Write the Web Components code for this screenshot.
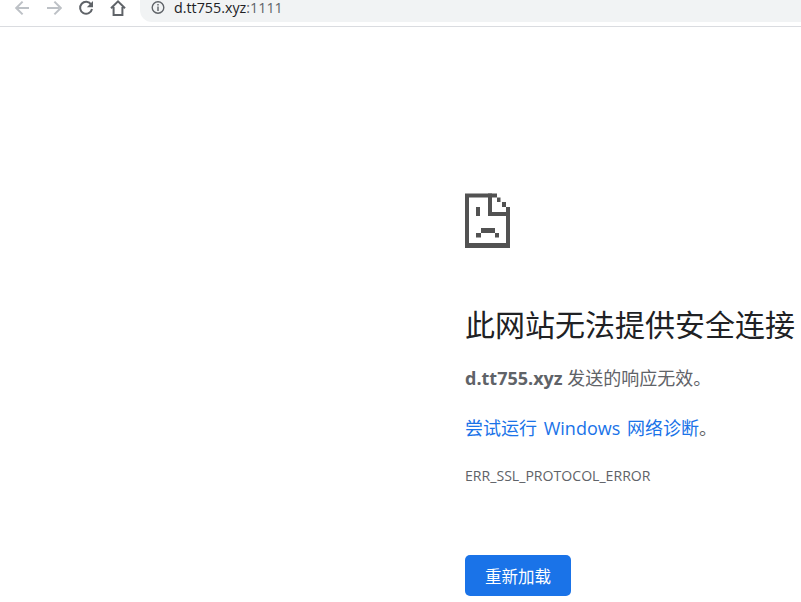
<!DOCTYPE html>
<html lang="zh">
<head>
<meta charset="utf-8">
<title>d.tt755.xyz</title>
<style>
    html, body {
        margin: 0;
        height: 100%;
        overflow: hidden;
        background: #fff;
        font-family: "Open Sans", "Noto Sans CJK SC", sans-serif;
    }
    a {
        color: #1a73e8;
    }
</style>
</head>
<body>
<browser-toolbar url-host="d.tt755.xyz" url-port=":1111"></browser-toolbar>
<error-page>
    <span slot="title">此网站无法提供安全连接</span>
    <span slot="summary"><b>d.tt755.xyz</b> 发送的响应无效。</span>
    <span slot="hint"><a>尝试运行 Windows 网络诊断</a>。</span>
    <span slot="code">ERR_SSL_PROTOCOL_ERROR</span>
    <span slot="action">重新加载</span>
</error-page>

<script>
class BrowserToolbar extends HTMLElement {

    constructor() {
        super();
        this.shadowDOM = this.attachShadow({ mode: "open" });
    }

    connectedCallback() {
        this.shadowDOM.innerHTML = `
        <style>
            :host {
                display: flex;
                align-items: flex-start;
                height: 26px;
                border-bottom: 1px solid #dadce0;
                overflow: hidden;
                background: #fff;
            }
            svg {
                display: block;
                flex: none;
            }
            .nav {
                display: flex;
                height: 16px;
                padding-left: 14px;
                gap: 16px;
            }
            .omnibox {
                flex: 1;
                display: flex;
                align-items: flex-start;
                gap: 8px;
                height: 22px;
                margin-left: 14px;
                padding-left: 11px;
                border-radius: 0 0 0 12px;
                background: #f1f3f4;
                font-size: 14.3px;
                line-height: 15px;
                color: #202124;
            }
            .omnibox div {
                white-space: nowrap;
            }
            .port {
                color: #5f6368;
            }
        </style>
        <div class="nav">
            <svg width="16" height="16" viewBox="0 0 16 16" fill="none" stroke="#bdc1c6" stroke-width="2">
                <path d="M15 8H3M8.6 1.6 2.2 8l6.4 6.4"/>
            </svg>
            <svg width="16" height="16" viewBox="0 0 16 16" fill="none" stroke="#bdc1c6" stroke-width="2">
                <path d="M1 8h12M8.4 1.6 14.8 8l-6.4 6.4"/>
            </svg>
            <svg width="16" height="16" viewBox="0 0 16 16" fill="none" stroke="#5f6368" stroke-width="2">
                <path d="M13.2 4.6A6 6 0 1 0 14 9"/>
                <path d="M15 1v6.2H8.8" fill="#5f6368" stroke="none"/>
            </svg>
            <svg width="16" height="16" viewBox="0 0 16 16" fill="none" stroke="#5f6368" stroke-width="2">
                <path d="M1 8.2 8 1.4l7 6.8M3.6 7v8h8.8V7"/>
            </svg>
        </div>
        <div class="omnibox">
            <svg width="15" height="15" viewBox="0 0 15 15" fill="none" stroke="#5f6368" stroke-width="1.4">
                <circle cx="7" cy="7.5" r="5.8"/>
                <path d="M7 6.6v4.4M7 4v1.5"/>
            </svg>
            <div>${this.getAttribute("url-host")}<span class="port">${this.getAttribute("url-port")}</span></div>
        </div>`;
    }
}

class SadPageIcon extends HTMLElement {

    constructor() {
        super();
        this.shadowDOM = this.attachShadow({ mode: "open" });
    }

    connectedCallback() {
        this.shadowDOM.innerHTML = `
        <style>
            :host {
                display: block;
                width: 45px;
                height: 55px;
            }
            svg {
                display: block;
            }
        </style>
        <svg width="45" height="55" viewBox="0 0 45 55" fill="#525252">
            <path d="M0 .5H32V4.5H4V50H41V14H45V55H0Z"/>
            <path d="M23 .5H27V19H45V23H23Z"/>
            <rect x="32" y="4.5" width="3.5" height="4.5"/>
            <rect x="37" y="9" width="4" height="5"/>
            <rect x="11" y="14" width="4" height="9"/>
            <rect x="16" y="35" width="14" height="5"/>
            <rect x="11" y="40" width="5" height="4.5"/>
            <rect x="30" y="40" width="4" height="4.5"/>
        </svg>`;
    }
}

class ErrorPage extends HTMLElement {

    constructor() {
        super();
        this.shadowDOM = this.attachShadow({ mode: "open" });
    }

    connectedCallback() {
        this.shadowDOM.innerHTML = `
        <style>
            :host {
                display: flex;
                flex-direction: column;
                align-items: flex-start;
                padding: 166px 0 0 465px;
                white-space: nowrap;
                color: #5f6368;
                font-size: 18px;
            }
            .title {
                margin-top: 58px;
                font-size: 30px;
                line-height: 38px;
                font-weight: 400;
                color: #202124;
            }
            .summary {
                margin-top: 22px;
                line-height: 24px;
            }
            .hint {
                margin-top: 26px;
                line-height: 24px;
                word-spacing: 2px;
            }
            .code {
                margin-top: 24px;
                font-size: 14.1px;
                line-height: 24px;
            }
            .reload {
                margin-top: 67px;
                padding: 0 20px;
                height: 41px;
                display: flex;
                align-items: center;
                border-radius: 5px;
                background: #1a73e8;
                color: #fff;
                font-size: 16.5px;
            }
        </style>
        <sad-page-icon></sad-page-icon>
        <div class="title"><slot name="title"></slot></div>
        <div class="summary"><slot name="summary"></slot></div>
        <div class="hint"><slot name="hint"></slot></div>
        <div class="code"><slot name="code"></slot></div>
        <div class="reload"><slot name="action"></slot></div>`;
    }
}

customElements.define('browser-toolbar', BrowserToolbar);
customElements.define('sad-page-icon', SadPageIcon);
customElements.define('error-page', ErrorPage);
</script>
</body>
</html>
